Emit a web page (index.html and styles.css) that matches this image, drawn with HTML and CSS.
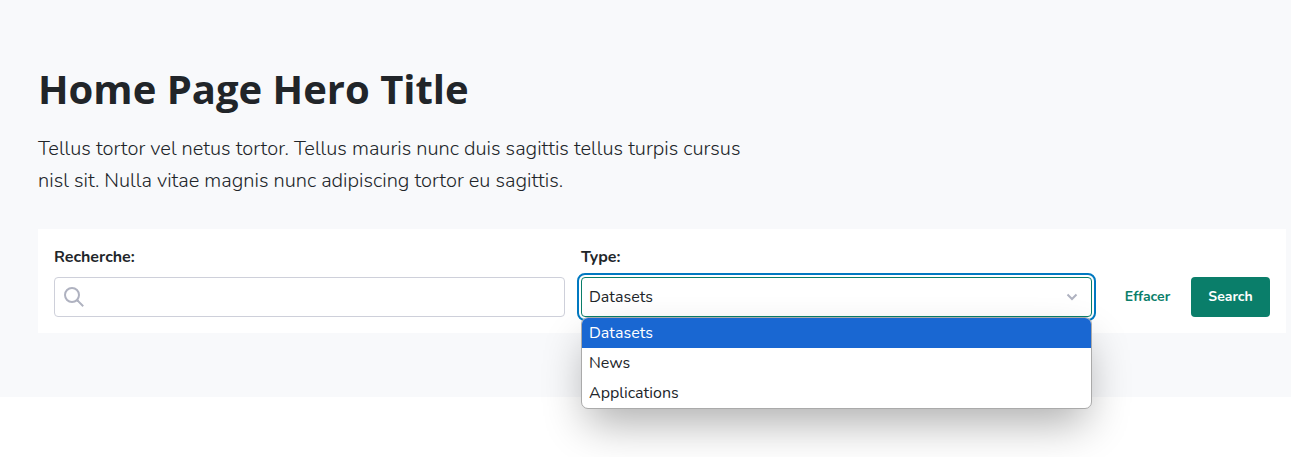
FILE: index.html
```html
<!DOCTYPE html>
<html lang="en">
<head>
<meta charset="utf-8">
<meta name="viewport" content="width=device-width, initial-scale=1">
<title>Home</title>
<link rel="stylesheet" href="styles.css">
</head>
<body>
<main class="hero">
  <h1 class="hero-title">Home Page Hero Title</h1>
  <p class="hero-text">Tellus tortor vel netus tortor. Tellus mauris nunc duis sagittis tellus turpis cursus nisl sit. Nulla vitae magnis nunc adipiscing tortor eu sagittis.</p>
  <form class="search-form">
    <div class="field">
      <label class="label" for="search">Recherche:</label>
      <div class="control">
        <input class="input" id="search" type="text">
        <svg class="search-icon" viewBox="0 0 20 20" aria-hidden="true"><circle cx="8" cy="8" r="7"/><path d="M12.500 14.300L14.300 12.500M13.400 13.400L19.200 19.200"/></svg>
      </div>
    </div>
    <div class="field">
      <label class="label" for="type">Type:</label>
      <div class="control">
        <select class="input select" id="type">
          <option>Datasets</option>
          <option>News</option>
          <option>Applications</option>
        </select>
        <svg class="chevron" viewBox="0 0 12 8" aria-hidden="true"><path d="M1.500 1.500L6 6l4.500-4.500"/></svg>
        <ul class="menu" role="listbox" aria-label="Type">
          <li class="menu-item menu-item-active" role="option" aria-selected="true">Datasets</li>
          <li class="menu-item" role="option" aria-selected="false">News</li>
          <li class="menu-item" role="option" aria-selected="false">Applications</li>
        </ul>
      </div>
    </div>
    <div class="actions">
      <button class="button button-ghost" type="reset">Effacer</button>
      <button class="button button-primary" type="submit">Search</button>
    </div>
  </form>
</main>
</body>
</html>
```
FILE: styles.css
```css
* {
  box-sizing: border-box;
}

body {
  min-height: 100vh;
  margin: 0;
  background: #fff;
  color: #212529;
  font-family: Nunito, Lato, "Open Sans", sans-serif;
  font-size: 16px;
  line-height: 24px;
}

.hero {
  padding: 64px 5px 64px 38px;
  background: #f8f9fb;
}

.hero-title {
  margin: 0 0 19px;
  font-family: "Open Sans", sans-serif;
  font-size: 40px;
  font-weight: 700;
  line-height: 50px;
}

.hero-text {
  max-width: 720px;
  margin: 0 0 32px;
  font-size: 20px;
  font-weight: 300;
  line-height: 32px;
}

.search-form {
  display: flex;
  align-items: flex-end;
  gap: 16px;
  padding: 16px;
  background: #fff;
}

.field {
  display: flex;
  flex: 1;
  flex-direction: column;
  gap: 8px;
  min-width: 0;
}

.label {
  font-weight: 700;
}

.control {
  position: relative;
  display: flex;
}

.input {
  width: 100%;
  height: 40px;
  padding: 0 8px 0 40px;
  border: 1px solid #ced0da;
  border-radius: 4px;
  background: #fff;
  color: inherit;
  font: inherit;
}

.select {
  padding: 0 32px 0 7px;
  border-color: #0a7e6a;
  outline: 2px solid #0079c1;
  outline-offset: 2px;
  appearance: none;
}

.search-icon,
.chevron {
  position: absolute;
  top: 10px;
  left: 10px;
  width: 20px;
  height: 20px;
  fill: none;
  stroke: #afb2c0;
  stroke-width: 2;
  pointer-events: none;
}

.chevron {
  top: 16px;
  right: 14px;
  left: auto;
  width: 12px;
  height: 8px;
}

.menu {
  position: absolute;
  z-index: 1;
  top: 100%;
  right: 0;
  left: 0;
  margin: 0;
  padding: 0;
  overflow: hidden;
  border: 1px solid #aaa;
  border-radius: 7px;
  background: #fff;
  box-shadow: 0 20px 44px -6px rgba(0, 0, 0, 0.32);
  list-style: none;
}

.menu-item {
  padding: 0 7px;
  line-height: 30px;
}

.menu-item-active {
  background: #1967d2;
  color: #fff;
}

.actions {
  display: flex;
  gap: 4px;
}

.button {
  width: 79px;
  height: 40px;
  padding: 0;
  border: 0;
  border-radius: 4px;
  font: inherit;
  font-size: 14px;
  font-weight: 700;
}

.button-ghost {
  background: transparent;
  color: #0a7e6a;
}

.button-primary {
  background: #0a7e6a;
  color: #fff;
}
```
